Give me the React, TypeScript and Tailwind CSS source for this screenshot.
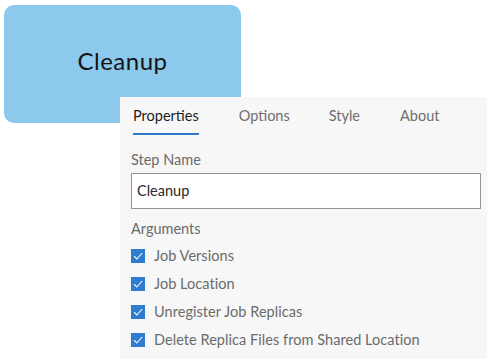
import React from "react";

const Check = ({ label }: { label: string }) => (
  <div className="flex items-center h-[28px]">
    <div className="w-[14px] h-[14px] bg-[#2e7bcf] flex items-center justify-center">
      <svg width="12" height="12" viewBox="0 0 12 12">
        <path d="M2 6.2 L4.8 9 L10.2 3" fill="none" stroke="#ffffff" strokeWidth="1.1" />
      </svg>
    </div>
    <span className="ml-[9px] text-[14.5px] text-[#6b6b6b] tracking-[0.05px]">{label}</span>
  </div>
);

export default function App() {
  return (
    <div
      className="w-[487px] h-[359px] bg-white overflow-hidden"
      style={{ fontFamily: "Lato, 'Open Sans', sans-serif" }}
    >
      <div className="ml-[4px] mt-[5px] w-[237px] h-[118px] rounded-[10px] bg-[#8dc8ed] flex items-center justify-center pb-[6px]">
        <span className="text-[24px] text-[#141414] tracking-[0.5px]">Cleanup</span>
      </div>
      <div className="relative ml-[120px] -mt-[26px] h-[262px] bg-[#f7f7f7] pl-[11px] pr-[6px]">
        <div className="flex h-[38px] text-[14.5px]">
          <div className="ml-[2px] flex flex-col">
            <span className="pt-[8px] text-[#1e1e1e]">Properties</span>
            <div className="mt-auto h-[2px] bg-[#2d79c6]" />
          </div>
          <span className="ml-[40px] pt-[8px] text-[#6e6e6e]">Options</span>
          <span className="ml-[39px] pt-[8px] text-[#6e6e6e]">Style</span>
          <span className="ml-[40px] pt-[8px] text-[#6e6e6e]">About</span>
        </div>
        <div className="mt-[16px] text-[14.5px] text-[#6b6b6b] leading-[17px]">Step Name</div>
        <div className="mt-[5px] h-[36px] border border-[#959595] bg-white flex items-center pl-[5px] text-[14.5px] text-[#2a2a2a]">
          Cleanup
        </div>
        <div className="mt-[11px] text-[14.5px] text-[#6b6b6b] leading-[17px]">Arguments</div>
        <div className="mt-[5px]">
          <Check label="Job Versions" />
          <Check label="Job Location" />
          <Check label="Unregister Job Replicas" />
          <Check label="Delete Replica Files from Shared Location" />
        </div>
      </div>
    </div>
  );
}
